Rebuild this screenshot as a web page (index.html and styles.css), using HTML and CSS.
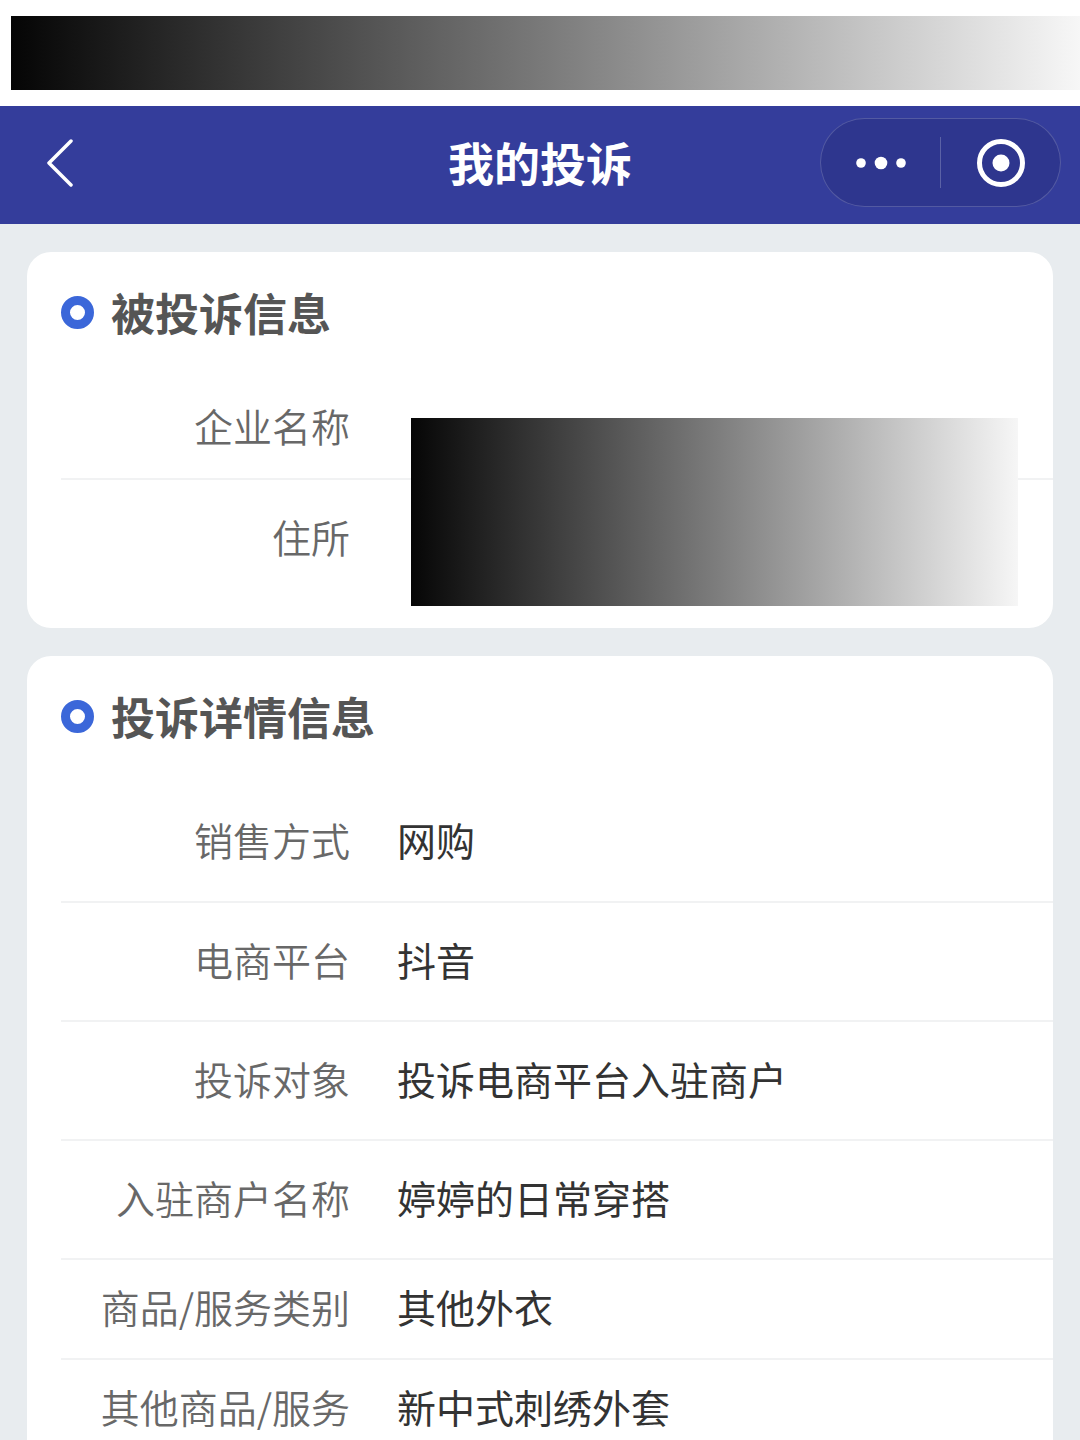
FILE: index.html
```html
<!DOCTYPE html>
<html lang="zh-CN">
<head>
<meta charset="utf-8">
<title>我的投诉</title>
<link rel="stylesheet" href="styles.css">
</head>
<body>
<div class="status">
  <div class="mask-bar"></div>
</div>
<header class="nav">
  <div class="nav-left">
    <svg class="back" width="28" height="48" viewBox="0 0 28 48"><polyline points="25,2 3,24 25,46" fill="none" stroke="#fff" stroke-width="3.5" stroke-linecap="round" stroke-linejoin="round"/></svg>
  </div>
  <h1 class="nav-title">我的投诉</h1>
  <div class="nav-right">
    <div class="capsule">
      <div class="cap-half">
        <svg width="54" height="16" viewBox="0 0 54 16"><circle cx="8" cy="8" r="4.8" fill="#fff"/><circle cx="28" cy="8" r="6.3" fill="#fff"/><circle cx="48" cy="8" r="4.8" fill="#fff"/></svg>
      </div>
      <div class="cap-divider"></div>
      <div class="cap-half">
        <svg width="52" height="52" viewBox="0 0 52 52"><circle cx="26" cy="26" r="21.5" fill="none" stroke="#fff" stroke-width="5"/><circle cx="26" cy="26" r="8.5" fill="#fff"/></svg>
      </div>
    </div>
  </div>
</header>
<main class="page">
  <section class="card">
    <div class="card-title"><span class="ring"></span>被投诉信息</div>
    <div class="row row-first-short"><span class="label">企业名称</span><span class="value"></span></div>
    <div class="row"><span class="label">住所</span><span class="value"></span></div>
    <div class="mask-block"></div>
  </section>
  <section class="card">
    <div class="card-title"><span class="ring"></span>投诉详情信息</div>
    <div class="row"><span class="label">销售方式</span><span class="value">网购</span></div>
    <div class="row"><span class="label">电商平台</span><span class="value">抖音</span></div>
    <div class="row"><span class="label">投诉对象</span><span class="value">投诉电商平台入驻商户</span></div>
    <div class="row"><span class="label">入驻商户名称</span><span class="value">婷婷的日常穿搭</span></div>
    <div class="row compact"><span class="label">商品/服务类别</span><span class="value">其他外衣</span></div>
    <div class="row compact"><span class="label">其他商品/服务</span><span class="value">新中式刺绣外套</span></div>
  </section>
</main>
</body>
</html>
```

FILE: styles.css
```css
* { box-sizing: border-box; }
html, body { margin: 0; padding: 0; }
body {
  background: #e8ecef;
  font-family: "Noto Sans CJK SC", "Noto Sans", sans-serif;
  width: 1080px;
  min-height: 1440px;
  overflow: hidden;
}
.status {
  background: #ffffff;
  height: 106px;
  padding: 16px 0 16px 11px;
}
.mask-bar {
  height: 74px;
  background: linear-gradient(to right, #050505 0%, #7a7a7a 50%, #f7f7f7 100%);
}
.nav {
  background: #343d9b;
  height: 118px;
  display: grid;
  grid-template-columns: 1fr auto 1fr;
  align-items: center;
}
.nav-left { padding-left: 46px; padding-bottom: 4px; display: flex; align-items: center; }
.back { display: block; }
.nav-title {
  margin: 0;
  padding-bottom: 8px;
  color: #ffffff;
  font-size: 46px;
  font-weight: 700;
  line-height: 1;
}
.nav-right { display: flex; justify-content: flex-end; padding-right: 19px; padding-bottom: 5px; }
.capsule {
  width: 241px;
  height: 89px;
  border-radius: 45px;
  background: #2e368e;
  border: 1.5px solid rgba(255,255,255,0.18);
  display: flex;
  align-items: center;
}
.cap-half { flex: 1; display: flex; align-items: center; justify-content: center; }
.cap-half svg { display: block; }
.cap-divider { width: 1.5px; height: 51px; background: rgba(255,255,255,0.22); }

.page {
  padding: 28px 27px;
  display: flex;
  flex-direction: column;
  gap: 28px;
}
.card {
  position: relative;
  background: #ffffff;
  border-radius: 24px;
  padding: 0 0 31px 34px;
}
.card-title {
  height: 126px;
  padding-bottom: 6px;
  display: flex;
  align-items: center;
  font-size: 44px;
  font-weight: 700;
  color: #555555;
}
.ring {
  width: 33px;
  height: 33px;
  border-radius: 50%;
  border: 9px solid #3b67d9;
  margin-right: 17px;
  flex: none;
}
.row {
  height: 119px;
  padding-bottom: 6px;
  display: flex;
  align-items: center;
  font-size: 39px;
  border-top: 2px solid #f1f2f3;
}
.card-title + .row { border-top: none; }
.row-first-short { height: 100px; }
.row.compact { height: 100px; }
.label {
  width: 289px;
  text-align: right;
  color: #686868;
  font-weight: 350;
  flex: none;
}
.value {
  margin-left: 47px;
  color: #333333;
}
.mask-block {
  position: absolute;
  left: 384px;
  top: 166px;
  width: 607px;
  height: 188px;
  background: linear-gradient(to right, #060606 0%, #7c7c7c 50%, #f6f6f6 100%);
}
```
